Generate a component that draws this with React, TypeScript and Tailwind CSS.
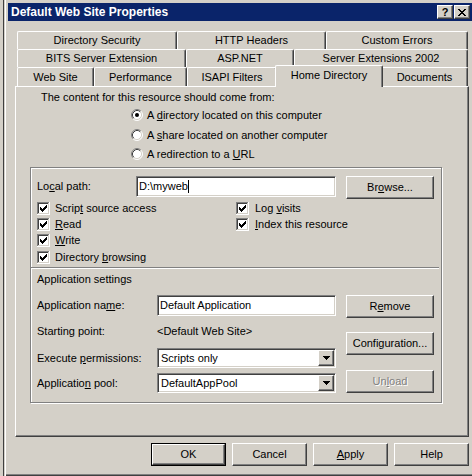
import React from "react";

const raised =
  "border border-t-white border-l-white border-r-[#404040] border-b-[#404040] shadow-[inset_-1px_-1px_0_#808080] bg-[#d4d0c8]";
const sunken =
  "border border-t-[#808080] border-l-[#808080] border-r-white border-b-white shadow-[inset_1px_1px_0_#404040,inset_-1px_-1px_0_#d4d0c8]";
const tabCls =
  "h-full flex items-center justify-center border-l border-t border-r border-l-white border-t-white border-r-[#404040] shadow-[inset_-1px_0_0_#808080] rounded-tl-[2px] rounded-tr-[2px] bg-[#d4d0c8] whitespace-nowrap";

function Check() {
  return (
    <svg width="13" height="13" viewBox="0 0 13 13" shapeRendering="crispEdges" className="shrink-0">
      <rect x="0" y="0" width="13" height="13" fill="#ffffff" />
      <rect x="0" y="0" width="12" height="12" fill="#808080" />
      <rect x="1" y="1" width="11" height="11" fill="#d4d0c8" />
      <rect x="1" y="1" width="10" height="10" fill="#404040" />
      <rect x="2" y="2" width="9" height="9" fill="#ffffff" />
      <path
        d="M9 3h1v1h-1z M8 4h2v1h-2z M3 5h1v1h-1z M7 5h3v1h-3z M3 6h2v1h-2z M6 6h3v1h-3z M3 7h5v1h-5z M4 8h3v1h-3z M5 9h1v1h-1z"
        fill="#000000"
      />
    </svg>
  );
}

function Radio({ checked }: { checked?: boolean }) {
  return (
    <svg width="12" height="12" viewBox="0 0 12 12" className="shrink-0">
      <circle cx="6" cy="6" r="5" fill="#ffffff" />
      <path d="M2.11 9.89 A5.5 5.5 0 0 1 9.89 2.11" stroke="#808080" strokeWidth="1" fill="none" />
      <path d="M9.89 2.11 A5.5 5.5 0 0 1 2.11 9.89" stroke="#ffffff" strokeWidth="1" fill="none" />
      <path d="M2.82 9.18 A4.5 4.5 0 0 1 9.18 2.82" stroke="#404040" strokeWidth="1" fill="none" />
      <path d="M9.18 2.82 A4.5 4.5 0 0 1 2.82 9.18" stroke="#d4d0c8" strokeWidth="1" fill="none" />
      {checked && <circle cx="6" cy="6" r="2" fill="#000000" />}
    </svg>
  );
}

function Arrow() {
  return (
    <svg width="7" height="4" viewBox="0 0 7 4" shapeRendering="crispEdges">
      <path d="M0 0h7v1h-7z M1 1h5v1h-5z M2 2h3v1h-3z M3 3h1v1h-1z" fill="#000000" />
    </svg>
  );
}

function CloseGlyph() {
  return (
    <svg width="8" height="7" viewBox="0 0 8 7" shapeRendering="crispEdges">
      <path
        d="M0 0h2v1h-2z M6 0h2v1h-2z M1 1h2v1h-2z M5 1h2v1h-2z M2 2h4v1h-4z M3 3h2v1h-2z M2 4h4v1h-4z M1 5h2v1h-2z M5 5h2v1h-2z M0 6h2v1h-2z M6 6h2v1h-2z"
        fill="#000000"
      />
    </svg>
  );
}

function Select({ value }: { value: string }) {
  return (
    <div className={`${sunken} w-[179px] h-[20px] bg-white flex items-stretch p-px`}>
      <span className="flex-1 flex items-center pl-[2px]">{value}</span>
      <div className={`${raised} w-[16px] flex items-center justify-center`}>
        <Arrow />
      </div>
    </div>
  );
}

export default function App() {
  return (
    <div className="w-[472px] h-[476px] overflow-hidden bg-[#d4d0c8] flex text-black text-[11px] leading-[13px] font-['Liberation_Sans',Arial,sans-serif]">
      <div className="w-[3px] shrink-0" />
      <div className="w-px shrink-0 bg-[#404040]" />
      <div className="flex-1 flex flex-col pl-[4px] pt-[3px] shadow-[inset_1px_0_0_#d4d0c8,inset_2px_0_0_#ffffff,inset_0_-1px_0_#404040,inset_0_-2px_0_#808080]">
        {/* Title bar */}
        <div className="h-[18px] bg-[#0a246a] flex items-center justify-between pl-[3px] pr-[2px] shrink-0">
          <span className="text-white font-bold text-[12px] whitespace-nowrap">Default Web Site Properties</span>
          <div className="flex gap-[1px]">
            <div className={`${raised} w-[16px] h-[14px] flex items-center justify-center font-bold text-[11px] leading-[11px]`}>?</div>
            <div className={`${raised} w-[16px] h-[14px] flex items-center justify-center`}>
              <CloseGlyph />
            </div>
          </div>
        </div>

        {/* Body */}
        <div className="pl-[7px] mt-[10px] flex flex-col">
          <div className="ml-[2px] w-[451px] flex flex-col">
            <div className="h-[18px] flex">
              <div className={`${tabCls} w-[160px]`}>Directory Security</div>
              <div className={`${tabCls} w-[149px]`}>HTTP Headers</div>
              <div className={`${tabCls} w-[142px]`}>Custom Errors</div>
            </div>
            <div className="h-[18px] flex">
              <div className={`${tabCls} w-[169px]`}>BITS Server Extension</div>
              <div className={`${tabCls} w-[108px]`}>ASP.NET</div>
              <div className={`${tabCls} w-[174px]`}>Server Extensions 2002</div>
            </div>
            <div className="h-[19px] flex">
              <div className={`${tabCls} w-[77px]`}>Web Site</div>
              <div className={`${tabCls} w-[93px]`}>Performance</div>
              <div className={`${tabCls} w-[90px]`}>ISAPI Filters</div>
              <div className="relative z-10 w-[108px] h-[22px] -mx-[2px] -mt-[2px] shrink-0 flex items-center justify-center pb-[2px] border-l border-t border-r border-l-white border-t-white border-r-[#404040] shadow-[inset_-1px_0_0_#808080] rounded-tl-[2px] rounded-tr-[2px] bg-[#d4d0c8] whitespace-nowrap">
                Home Directory
              </div>
              <div className={`${tabCls} w-[87px]`}>Documents</div>
            </div>
          </div>

          {/* Panel */}
          <div className="w-[454px] h-[351px] border border-t-white border-l-white border-r-[#404040] border-b-[#404040] shadow-[inset_-1px_-1px_0_#808080] flex flex-col">
            <div className="mt-[4px] pl-[25px] h-[13px] whitespace-nowrap">The content for this resource should come from:</div>
            <div className="mt-[3px] h-[16px] pl-[115px] flex items-center">
              <Radio checked />
              <span className="ml-[4px] whitespace-nowrap">
                A <u>d</u>irectory located on this computer
              </span>
            </div>
            <div className="mt-[4px] h-[16px] pl-[115px] flex items-center">
              <Radio />
              <span className="ml-[4px] whitespace-nowrap">
                A <u>s</u>hare located on another computer
              </span>
            </div>
            <div className="mt-[3px] h-[16px] pl-[115px] flex items-center">
              <Radio />
              <span className="ml-[4px] whitespace-nowrap">
                A redirection to a <u>U</u>RL
              </span>
            </div>

            {/* Group box */}
            <div className="ml-[14px] mt-[5px] w-[412px] h-[236px] border border-[#808080] shadow-[inset_1px_1px_0_#ffffff,1px_1px_0_#ffffff] flex flex-col">
              <div className="mt-[8px] pl-[6px] flex items-start h-[23px]">
                <div className="w-[99px] h-[21px] flex items-center whitespace-nowrap">
                  Lo<u>c</u>al path:
                </div>
                <div className={`${sunken} w-[200px] h-[21px] bg-white flex items-center pl-[2px]`}>
                  <span>D:\myweb</span>
                  <span className="inline-block w-px h-[13px] bg-black" />
                </div>
                <div className={`${raised} ml-[10px] w-[88px] h-[23px] flex items-center justify-center`}>
                  Br<u>o</u>wse...
                </div>
              </div>

              <div className="mt-[1px] pl-[6px] grid grid-cols-[199px_1fr]">
                <div className="h-[16px] flex items-center">
                  <Check />
                  <span className="ml-[5px] whitespace-nowrap">
                    Scrip<u>t</u> source access
                  </span>
                </div>
                <div className="h-[16px] flex items-center">
                  <Check />
                  <span className="ml-[6px] whitespace-nowrap">
                    Log <u>v</u>isits
                  </span>
                </div>
                <div className="h-[16px] flex items-center">
                  <Check />
                  <span className="ml-[5px]">
                    <u>R</u>ead
                  </span>
                </div>
                <div className="h-[16px] flex items-center">
                  <Check />
                  <span className="ml-[6px] whitespace-nowrap">
                    <u>I</u>ndex this resource
                  </span>
                </div>
                <div className="h-[16px] flex items-center">
                  <Check />
                  <span className="ml-[5px]">
                    <u>W</u>rite
                  </span>
                </div>
                <div className="h-[16px]" />
                <div className="h-[16px] mt-[1px] flex items-center">
                  <Check />
                  <span className="ml-[5px] whitespace-nowrap">
                    Directory <u>b</u>rowsing
                  </span>
                </div>
                <div className="h-[16px] mt-[1px]" />
              </div>

              <div className="mt-[2px] w-[408px] h-[2px] border-t border-b border-t-[#808080] border-b-white" />

              <div className="mt-[4px] pl-[6px] h-[13px] whitespace-nowrap">Application settings</div>

              <div className="mt-[9px] pl-[6px] flex">
                <div className="w-[299px] flex flex-col">
                  <div className="h-[21px] flex items-center">
                    <div className="w-[120px] whitespace-nowrap">
                      Application na<u>m</u>e:
                    </div>
                    <div className={`${sunken} w-[179px] h-[21px] bg-white flex items-center pl-[2px] whitespace-nowrap`}>
                      Default Application
                    </div>
                  </div>
                  <div className="mt-[7px] h-[17px] flex items-center">
                    <div className="w-[120px] whitespace-nowrap">Starting point:</div>
                    <div className="whitespace-nowrap">&lt;Default Web Site&gt;</div>
                  </div>
                  <div className="mt-[8px] h-[20px] flex items-center">
                    <div className="w-[120px] whitespace-nowrap">
                      Execute <u>p</u>ermissions:
                    </div>
                    <Select value="Scripts only" />
                  </div>
                  <div className="mt-[5px] h-[20px] flex items-center">
                    <div className="w-[120px] whitespace-nowrap">
                      Applicatio<u>n</u> pool:
                    </div>
                    <Select value="DefaultAppPool" />
                  </div>
                </div>
                <div className="ml-[10px] flex flex-col">
                  <div className={`${raised} w-[88px] h-[23px] flex items-center justify-center`}>
                    R<u>e</u>move
                  </div>
                  <div className={`${raised} mt-[14px] w-[88px] h-[23px] flex items-center justify-center`}>
                    Configuration...
                  </div>
                  <div className={`${raised} mt-[15px] w-[88px] h-[23px] flex items-center justify-center text-[#808080] [text-shadow:1px_1px_0_#ffffff]`}>
                    Un<u>l</u>oad
                  </div>
                </div>
              </div>
            </div>
          </div>

          {/* Dialog buttons */}
          <div className="mt-[6px] w-[454px] flex justify-end gap-[6px]">
            <div className="w-[75px] h-[23px] border border-black">
              <div className={`${raised} w-full h-full flex items-center justify-center`}>OK</div>
            </div>
            <div className={`${raised} w-[75px] h-[23px] flex items-center justify-center`}>Cancel</div>
            <div className={`${raised} w-[75px] h-[23px] flex items-center justify-center`}>
              <u>A</u>pply
            </div>
            <div className={`${raised} w-[75px] h-[23px] flex items-center justify-center`}>Help</div>
          </div>
        </div>
      </div>
    </div>
  );
}
